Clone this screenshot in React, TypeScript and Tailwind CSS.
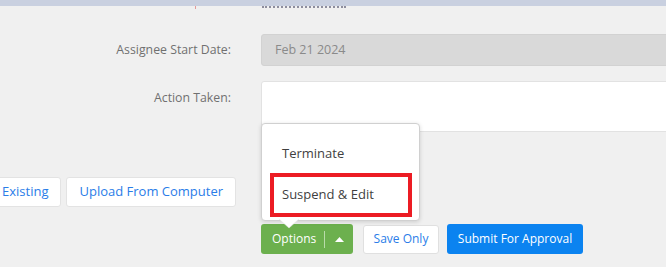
import React from 'react';

const font = { fontFamily: '"Open Sans", "Liberation Sans", sans-serif' };

function OptionsMenu() {
    return (
        <div className="absolute bottom-full left-0 mb-[3px] w-[159px] h-[98px] bg-white border border-[#d0d0d0] rounded-[4px] shadow-[0_1px_4px_rgba(0,0,0,0.15)]">
            <div className="pt-[20px] pl-[20px] h-[49px] text-[13px] leading-[18px] text-[#3f3f3f]">Terminate</div>
            <div className="ml-[8px] w-[142px] h-[44px] border-[4px] border-[#ec1c24] flex items-center pl-[8px] text-[13px] text-[#3f3f3f]">
                Suspend &amp; Edit
            </div>
            <svg className="absolute left-[17px] top-full -mt-[1px]" width="20" height="10" viewBox="0 0 20 10">
                <path d="M0 0 L10 9 L20 0 Z" fill="#ffffff" />
                <path d="M0 0 L10 9 L20 0" fill="none" stroke="#e2e2e2" strokeWidth="0.6" />
            </svg>
        </div>
    );
}

export default function App() {
    return (
        <div className="relative w-[666px] h-[267px] overflow-hidden bg-[#f0f0f0] text-[12px]" style={font}>
            <div className="h-[6px] bg-[#c9d0e0]" />
            <div className="flex h-[3px]">
                <div className="ml-[195px] w-[1px] h-[3px] bg-[#e39a9a]" />
                <div className="ml-[66px] w-[84px] h-[2px] border-b-2 border-dotted border-[#8e8e9e]" />
            </div>

            <div className="grid grid-cols-[231px_1fr] gap-x-[30px] mt-[25px]">
                <div className="flex items-center justify-end text-[12.3px] text-[#707070]">Assignee Start Date:</div>
                <div className="h-[32px] w-[420px] bg-[#d9d9d9] border border-[#d2d2d2] rounded-[3px] flex items-center pl-[13px] text-[12.5px] text-[#8a8a8a]">
                    Feb 21 2024
                </div>

                <div className="mt-[15px] pt-[8px] text-right text-[12.3px] text-[#707070]">Action Taken:</div>
                <div className="mt-[15px] h-[51px] w-[420px] bg-white border border-[#e2e2e2] rounded-[3px]" />
            </div>

            <div className="flex gap-[5px] mt-[45px] -ml-[11px] text-[13px]">
                <button className="h-[30px] px-[12px] bg-white border border-[#e3e3e3] rounded-[3px] text-[#2a7de8]">Existing</button>
                <button className="h-[30px] px-[12px] bg-white border border-[#e3e3e3] rounded-[3px] text-[#2a7de8]">Upload From Computer</button>
            </div>

            <div className="flex items-center mt-[17px] ml-[261px]">
                <div className="relative">
                    <OptionsMenu />
                    <button className="h-[30px] w-[92px] flex items-center bg-[#6cb04e] rounded-[3px] text-white pl-[11px]">
                        <span>Options</span>
                        <span className="ml-[8px] w-[1px] h-[17px] bg-[#b9dbaa]" />
                        <svg className="ml-[10px]" width="9" height="5" viewBox="0 0 9 5">
                            <path d="M0 5 L4.5 0 L9 5 Z" fill="#ffffff" />
                        </svg>
                    </button>
                </div>
                <button className="ml-[10px] h-[29px] w-[76px] bg-white border border-[#e0e0e0] rounded-[3px] text-[#2a7de8]">Save Only</button>
                <button className="ml-[8px] h-[30px] w-[136px] bg-[#0b83f0] rounded-[3px] text-white">Submit For Approval</button>
            </div>
        </div>
    );
}
